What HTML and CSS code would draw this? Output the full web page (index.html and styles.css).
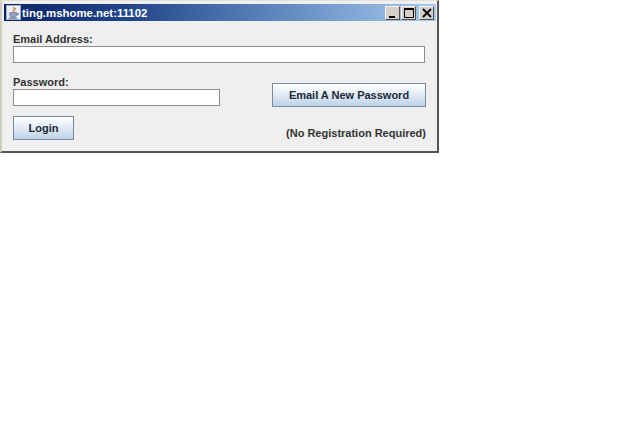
FILE: index.html
```html
<!DOCTYPE html>
<html lang="en">
<head>
<meta charset="utf-8">
<title>ting.mshome.net:11102</title>
<link rel="stylesheet" href="styles.css">
</head>
<body>
<div class="window">
  <div class="titlebar">
    <svg class="app-icon" width="15" height="15" viewBox="0 0 16 16">
      <rect x="0.5" y="0.5" width="15" height="15" fill="#eef0f6" stroke="#9fb0cc"/>
      <path d="M8 2c2 2-2 3 0 5M10 3c1 2-2 2-1 4" fill="none" stroke="#c8622a" stroke-width="1"/>
      <path d="M4 8h7v3c0 1-1 2-2 2H6c-1 0-2-1-2-2z" fill="#9aa6c0" stroke="#4a5a80" stroke-width=".6"/>
      <path d="M3 14h9" stroke="#4a5a80"/>
      <path d="M11 9h2v1.500h-2" fill="none" stroke="#4a5a80" stroke-width=".8"/>
    </svg>
    <span class="title-text">ting.mshome.net:11102</span>
    <div class="controls">
      <span class="ctl"><svg width="12" height="12" viewBox="0 0 12 12"><path d="M2 10h6" stroke="#000" stroke-width="2"/></svg></span>
      <span class="ctl"><svg width="12" height="12" viewBox="0 0 12 12"><path d="M1.500 2.500h9v8h-9z" fill="none" stroke="#000"/><path d="M1 2h10" stroke="#000" stroke-width="2"/></svg></span>
      <span class="ctl ctl-close"><svg width="12" height="12" viewBox="0 0 12 12"><path d="M2 2l8 8M10 2l-8 8" stroke="#000" stroke-width="1.800"/></svg></span>
    </div>
  </div>
  <form class="content">
    <label class="label label-email" for="email">Email Address:</label>
    <input class="field field-email" id="email" type="text">
    <div class="col-left">
      <label class="label" for="pw">Password:</label>
      <input class="field field-pw" id="pw" type="password">
      <button class="btn btn-login" type="button">Login</button>
    </div>
    <div class="col-right">
      <button class="btn btn-email" type="button">Email A New Password</button>
      <span class="note">(No Registration Required)</span>
    </div>
  </form>
</div>
</body>
</html>
```
FILE: styles.css
```css
html, body {
  margin: 0;
  padding: 0;
  background: #fff;
}
body {
  width: 640px;
  height: 438px;
  overflow: hidden;
  font-family: "Liberation Sans", Arial, sans-serif;
}
.window {
  box-sizing: border-box;
  width: 439px;
  height: 153px;
  background: #efefef;
  border-style: solid;
  border-color: #e4e2d8 #555553 #555553 #cfcdc4;
  border-width: 1px 2px 2px 2px;
  padding-top: 3px;
  display: flex;
  flex-direction: column;
}
.titlebar {
  height: 17px;
  flex: none;
  display: flex;
  align-items: center;
  margin: 0 1px 0 2px;
  padding: 0 2px;
  background: linear-gradient(90deg, #0a246a 0%, #24478a 30%, #4f78b2 55%, #a6caf0 100%);
}
.app-icon {
  flex: none;
}
.title-text {
  margin-left: 1px;
  color: #fff;
  font-size: 11.4px;
  font-weight: bold;
}
.controls {
  margin-left: auto;
  display: flex;
  gap: 1px;
}
.ctl {
  box-sizing: border-box;
  width: 15px;
  height: 14px;
  display: flex;
  align-items: center;
  justify-content: center;
  background: #d4d0c8;
  border: 1px solid;
  border-color: #f4f4f0 #505050 #505050 #f4f4f0;
}
.ctl-close {
  margin-left: 2px;
}
.content {
  display: grid;
  grid-template-columns: 207px 1fr;
  grid-template-rows: auto auto auto;
  column-gap: 52px;
  padding: 11px 11px 0;
}
.label {
  display: block;
  height: 14px;
  line-height: 14px;
  font-size: 11px;
  font-weight: bold;
  color: #333;
}
.label-email {
  grid-column: 1 / 3;
}
.field {
  box-sizing: border-box;
  display: block;
  height: 17px;
  margin: 0;
  padding: 0 2px;
  background: #fff;
  border: 1px solid #8a8c90;
  border-radius: 0;
  outline: none;
}
.field-email {
  grid-column: 1 / 3;
  width: 412px;
}
.col-left {
  padding-top: 12px;
}
.field-pw {
  width: 207px;
}
.btn {
  box-sizing: border-box;
  display: block;
  margin: 0;
  padding: 0;
  font-family: inherit;
  font-size: 11px;
  font-weight: bold;
  color: #1c2a3c;
  border: 1px solid #7a8a9c;
  background: linear-gradient(180deg, #fff 0%, #e4ecf5 45%, #bdd2e7 100%);
}
.btn-login {
  width: 61px;
  height: 24px;
  margin-top: 10px;
}
.col-right {
  display: flex;
  flex-direction: column;
  align-items: flex-end;
  padding-top: 20px;
}
.btn-email {
  width: 154px;
  height: 24px;
}
.note {
  margin-top: 20px;
  font-size: 11px;
  line-height: 13px;
  font-weight: bold;
  color: #333;
}
```
